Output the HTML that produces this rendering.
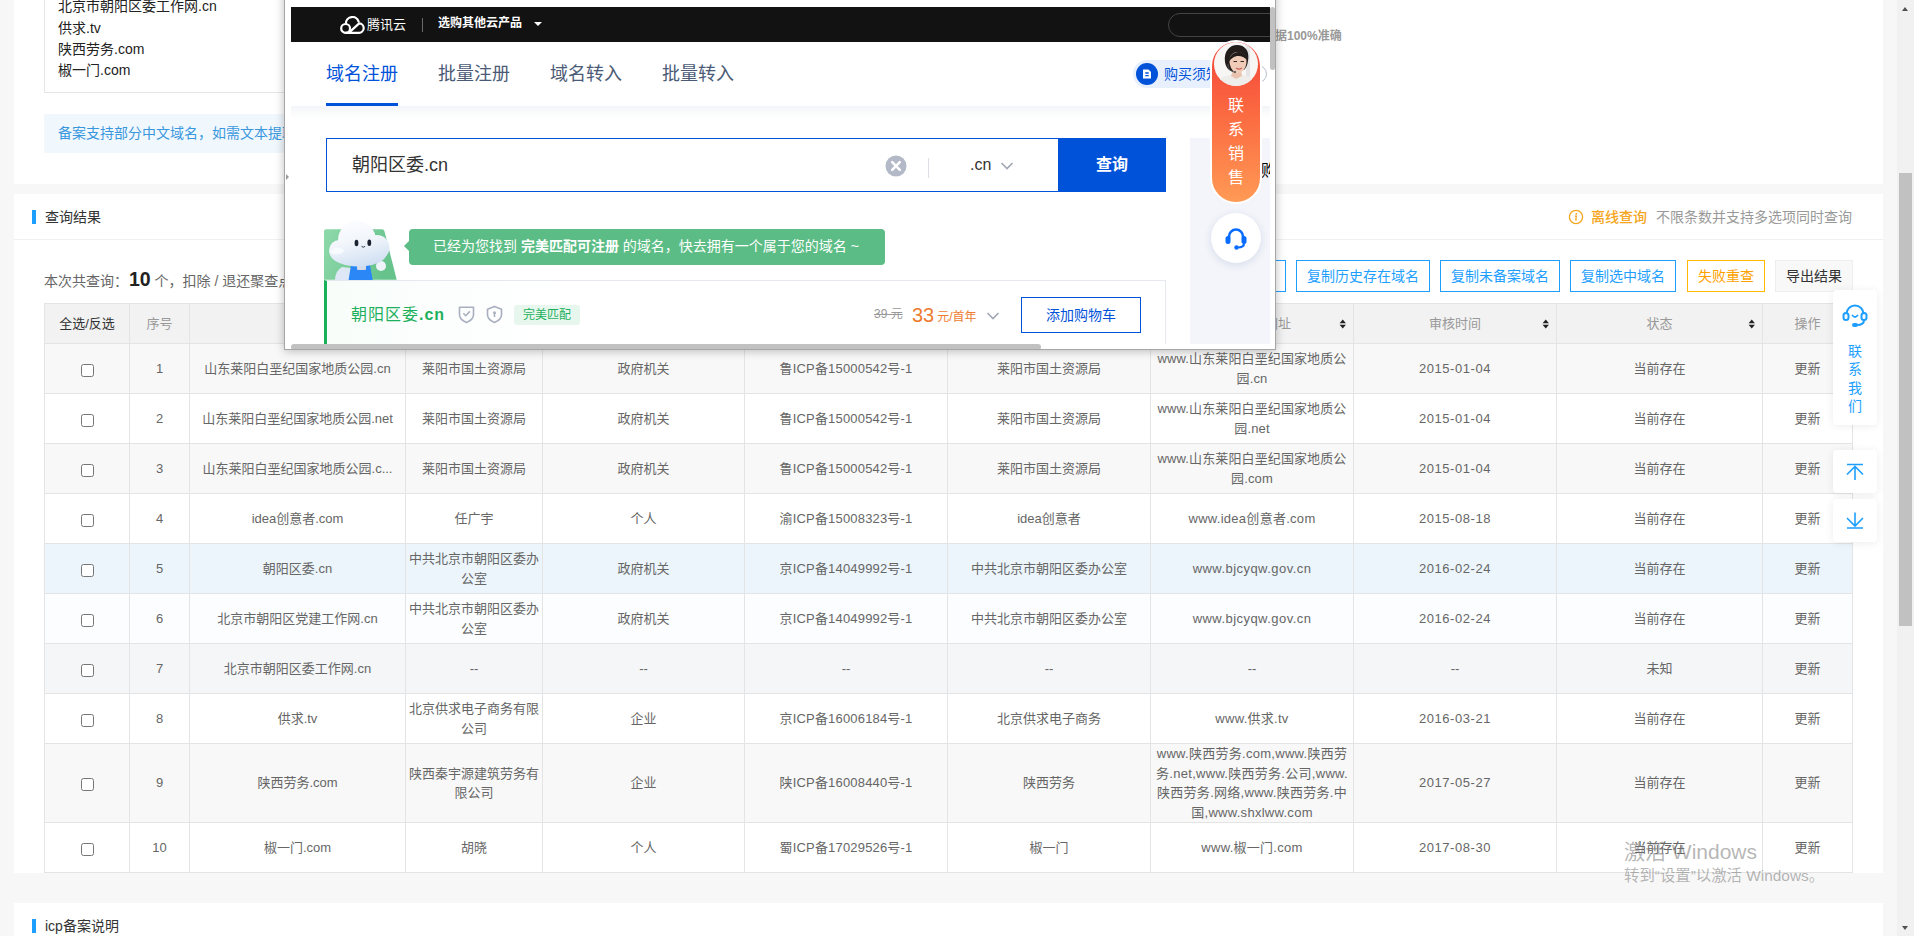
<!DOCTYPE html>
<html lang="zh-CN">
<head>
<meta charset="utf-8">
<title>ICP备案批量查询</title>
<style>
*{box-sizing:border-box;}
html,body{margin:0;padding:0;}
body{width:1914px;height:936px;overflow:hidden;position:relative;background:#f7f7f7;
  font-family:"Liberation Sans","Noto Sans CJK SC",sans-serif;font-size:14px;color:#333;}
.abs{position:absolute;}
/* ---------- page cards ---------- */
.card{position:absolute;left:14px;width:1869px;background:#fff;}
#card1{top:-60px;height:244px;}
#card2{top:194px;height:679px;}
#card3{top:903px;height:60px;}
.ctitle{position:absolute;left:18px;height:14px;border-left:4px solid #1e9fff;padding-left:9px;
  font-size:14px;line-height:14px;color:#333;white-space:nowrap;}
.ctitle span{position:relative;top:0px;}
/* textarea */
#ta{position:absolute;left:30px;top:-20px;width:1100px;height:173px;border:1px solid #e6e6e6;
  padding:33px 0 0 13px;font-size:14px;line-height:21.200px;color:#222;white-space:nowrap;}
#tip{position:absolute;left:30px;top:174px;width:1100px;height:39px;background:#f0f8fe;color:#3a97dd;
  font-size:14px;line-height:39px;padding-left:14px;white-space:nowrap;overflow:hidden;}
#acc{position:absolute;left:1261px;top:89px;font-size:12px;font-weight:bold;color:#999;white-space:nowrap;line-height:14px;}
/* result header */
#hr1{position:absolute;left:0;top:45px;width:1869px;height:1px;background:#f0f0f0;}
#offline{position:absolute;right:31px;top:15px;height:16px;font-size:14px;line-height:16px;white-space:nowrap;color:#999;}
#offline b{color:#f5a623;font-weight:500;margin:0 9px 0 7px;}
#offline svg{vertical-align:-3px;}
#count{position:absolute;left:30px;top:70px;font-size:14px;line-height:30px;color:#666;white-space:nowrap;}
#count b{font-size:19.500px;color:#222;font-weight:bold;margin:0 0 0 1px;position:relative;top:0px;}
#btns{position:absolute;right:30px;top:66px;height:32px;white-space:nowrap;font-size:0;}
.btn{display:inline-block;height:32px;line-height:30px;padding:0 10px;border:1px solid #1e9fff;color:#1e9fff;
  font-size:14px;margin-left:10px;background:#fff;vertical-align:top;}
.btn.warm{border-color:#ffb800;color:#ffa200;margin-left:11px;}
.btn.plain{border-color:#eee;color:#333;background:#f8f8f8;}
/* ---------- table ---------- */
#tbl{position:absolute;left:30px;top:109px;border-collapse:separate;border-spacing:0;table-layout:fixed;
  width:1809px;border-left:1px solid #e4e4e4;border-top:1px solid #e4e4e4;font-size:13px;color:#666;}
#tbl th,#tbl td{border-right:1px solid #e4e4e4;border-bottom:1px solid #e4e4e4;padding:0 3px;text-align:center;
  line-height:19.5px;font-weight:normal;white-space:nowrap;overflow:hidden;}
#tbl th{height:40px;background:#f2f2f2;color:#999;position:relative;}
#tbl th.dark{color:#333;}
#tbl td{height:50px;}
#tbl td.w{letter-spacing:.28px;}#tbl td.w2{letter-spacing:.12px;}#tbl td.n{letter-spacing:.55px;}#tbl td.u{letter-spacing:.45px;}#tbl td.i{letter-spacing:.18px;}
#tbl tr.g td{background:#f8f8f8;}
#tbl tr.g7 td{background:#f5f6f8;}
#tbl tr.h td{background:#ecf5fb;}
#tbl tr.l td{background:#fbfdff;}
#tbl tr.tall td{height:78px;}
.cb{display:inline-block;width:13px;height:13px;border:1px solid #767676;border-radius:2.5px;background:#fff;vertical-align:middle;position:relative;top:1px;}
.sort{position:absolute;right:6.500px;top:15px;width:7.500px;height:10px;}

/* ---------- popup ---------- */
#pop{position:absolute;left:284px;top:-12px;width:992px;height:362px;background:#fff;border:1px solid #a6a6a6;
  box-shadow:0 1px 9px rgba(0,0,0,.26);overflow:hidden;}
#pin{position:absolute;left:6px;top:18px;width:979px;height:337px;overflow:hidden;background:#fff;}
#pbar{position:absolute;left:0;top:0;width:979px;height:35px;background:#121212;}
#plogo{position:absolute;left:49px;top:9px;}
#plogot{position:absolute;left:76px;top:9px;font-size:13px;line-height:18px;color:#fff;white-space:nowrap;}
#pdiv{position:absolute;left:131px;top:11px;width:1px;height:14px;background:#6a6a6a;}
#pmenu{position:absolute;left:147px;top:8px;font-size:12px;line-height:16px;font-weight:bold;color:#fff;white-space:nowrap;}
#pcaret{position:absolute;left:243px;top:15px;width:0;height:0;border-left:4px solid transparent;border-right:4px solid transparent;border-top:4.5px solid #fff;}
#psearch{position:absolute;left:877px;top:6px;width:140px;height:24px;border:1px solid #444;border-radius:12px;}
#ptabs{position:absolute;left:0;top:35px;width:979px;height:64px;background:#fff;}
.ptab{position:absolute;top:20px;font-size:18px;line-height:24px;color:#4b5b76;white-space:nowrap;}
.ptab.on{color:#0052d9;}
#pline{position:absolute;left:35px;top:61px;width:72px;height:3px;background:#0052d9;}
#pgrad{position:absolute;left:0;top:99px;width:979px;height:12px;background:linear-gradient(#f3f5f8,#fff);}
#pnote{position:absolute;left:842px;top:18px;width:112px;height:28px;border-radius:14px;background:#e8f0fe;}
#pnote i{position:absolute;left:3px;top:3px;width:22px;height:22px;border-radius:11px;background:#0052d9;}
#pnote span{position:absolute;left:31px;top:4px;font-size:14px;line-height:20px;color:#0052d9;white-space:nowrap;}
#pbox{position:absolute;left:35px;top:131px;width:733px;height:54px;border:1px solid #0052d9;border-right:0;background:#fff;}
#pbox .v{position:absolute;left:25px;top:13px;font-size:18px;line-height:26px;color:#333;white-space:nowrap;}
#pclr{position:absolute;left:558px;top:16px;}
#pbox .d{position:absolute;left:601px;top:19px;width:1px;height:20px;background:#dcdfe6;}
#pbox .s{position:absolute;left:643px;top:15px;font-size:16px;line-height:22px;color:#333;}
#pchev{position:absolute;left:673px;top:22px;}
#pgo{position:absolute;left:767px;top:131px;width:108px;height:54px;background:#0052d9;color:#fff;font-size:16px;font-weight:bold;
  line-height:54px;text-align:center;}
#pside{position:absolute;left:899px;top:131px;width:90px;height:220px;background:#f3f5fa;}
#pside span{position:absolute;left:71px;top:22px;font-size:16px;line-height:22px;color:#000;}
#pmasbg{position:absolute;left:29px;top:209px;}
#pbubble{position:absolute;left:118px;top:222px;width:476px;height:36px;border-radius:4px;background:#5bbd85;color:#fff;font-size:14px;
  line-height:35px;padding-left:24px;white-space:nowrap;}
#pbubble:before{content:"";position:absolute;left:-5px;top:12px;border-top:5px solid transparent;border-bottom:5px solid transparent;border-right:5px solid #5bbd85;}
#pres{position:absolute;left:33px;top:273px;width:842px;height:80px;border:1px solid #e5e8ee;border-left:3px solid #19b05b;
  background:linear-gradient(90deg,#f8fdfa,#fff 28%);}
#pres .dn{position:absolute;left:24px;top:22px;font-size:16px;letter-spacing:1px;line-height:24px;color:#1db05c;font-weight:normal;white-space:nowrap;}
#pres .dn b{font-weight:bold;}
#pres .tag{position:absolute;left:187px;top:24px;width:66px;height:20px;border-radius:3px;background:#e8f7ee;color:#1db05c;font-size:12px;
  line-height:20px;text-align:center;}
#pres .old{position:absolute;left:547px;top:24px;font-size:12px;line-height:18px;color:#999;text-decoration:line-through;white-space:nowrap;}
#pres .now{position:absolute;left:585px;top:18px;font-size:12px;line-height:30px;color:#ed7b2f;white-space:nowrap;}
#pres .now b{font-size:20px;font-weight:normal;margin-right:3px;position:relative;top:1px;}
#pres .add{position:absolute;left:694px;top:16px;width:120px;height:36px;border:1px solid #0052d9;color:#0052d9;font-size:14px;line-height:34px;text-align:center;background:#fff;}
#phs{position:absolute;left:6px;top:355px;width:750px;height:6px;background:#c1c1c1;border-radius:3px;}
#pvs{position:absolute;left:985px;top:18px;width:5px;height:63px;background:#c1c1c1;border-radius:3px;}
#parrow{position:absolute;left:1px;top:185px;width:0;height:0;border-top:3px solid transparent;border-bottom:3px solid transparent;border-left:3px solid #999;}
/* sales pill */
#pill{position:absolute;left:919px;top:33px;width:52px;height:164px;border-radius:26px;background:#fff;}
#pill .in{position:absolute;left:2px;top:2px;width:48px;height:160px;border-radius:24px;background:linear-gradient(180deg,#f4443a 0%,#fb6a41 45%,#ff9a55 100%);}
#pill .t{position:absolute;left:2px;top:54px;width:48px;text-align:center;color:#fff;font-size:16px;line-height:24px;}
#pava{position:absolute;left:4px;top:2px;}
#pkf{position:absolute;left:920px;top:206px;width:50px;height:50px;border-radius:25px;background:#fff;box-shadow:0 2px 8px rgba(0,40,120,.12);}
#pkf svg{position:absolute;left:12px;top:12px;}

/* ---------- floating sidebar / scrollbar / watermark ---------- */
.fl{position:absolute;left:1833px;width:44px;background:#fff;border-radius:4px;box-shadow:0 1px 8px rgba(0,0,0,.08);}
#fl1{top:290px;height:135px;}
#fl1 svg{position:absolute;left:9px;top:13px;}
#fl1 .t{position:absolute;left:0;top:52px;width:44px;text-align:center;font-size:14px;line-height:18.400px;color:#1e9fff;}
#fl2{top:450px;height:43px;}
#fl3{top:499px;height:43px;}
#fl2 svg,#fl3 svg{position:absolute;left:12px;top:11px;}
#sbar{position:absolute;left:1897px;top:0;width:17px;height:936px;background:#f1f1f1;}
#sbar .th{position:absolute;left:2px;top:173px;width:13px;height:453px;background:#c1c1c1;}
#sbar .u{position:absolute;left:5px;top:7px;width:0;height:0;border-left:3.500px solid transparent;border-right:3.500px solid transparent;border-bottom:4px solid #505050;}
#sbar .d{position:absolute;left:5px;top:926px;width:0;height:0;border-left:3.500px solid transparent;border-right:3.500px solid transparent;border-top:4px solid #505050;}
#wm{position:absolute;left:1624px;top:838px;color:rgba(120,120,120,.55);white-space:nowrap;}
#wm .a{font-size:21px;line-height:28px;}
#wm .b{font-size:15.400px;line-height:20px;margin-top:0px;}
</style>
</head>
<body>

<!-- ================= card 1 : input ================= -->
<div class="card" id="card1">
  <div id="ta">朝阳区委.cn<br>北京市朝阳区党建工作网.cn<br>北京市朝阳区委工作网.cn<br>供求.tv<br>陕西劳务.com<br>椒一门.com</div>
  <div id="tip">备案支持部分中文域名，如需文本提取域名请使用域名提取工具，查询结果仅供参考</div>
  <div id="acc">据100%准确</div>
</div>

<!-- ================= card 2 : results ================= -->
<div class="card" id="card2">
  <div class="ctitle" style="top:16px;"><span>查询结果</span></div>
  <div id="offline"><svg width="16" height="16" viewBox="0 0 16 16"><circle cx="8" cy="8" r="6.6" fill="none" stroke="#f5a623" stroke-width="1.3"/><circle cx="8.3" cy="4.9" r="0.9" fill="#f5a623"/><path d="M6.9 7.2h1.5l-.7 3.6h1.2" fill="none" stroke="#f5a623" stroke-width="1.2"/></svg><b>离线查询</b>不限条数并支持多选项同时查询</div>
  <div id="hr1"></div>
  <div id="count">本次共查询：<b>10</b> 个，扣除 / 退还聚查点：10 / 0</div>
  <div id="btns">
    <span class="btn">复制当前存在域名</span><span class="btn">复制历史存在域名</span><span class="btn">复制未备案域名</span><span class="btn">复制选中域名</span><span class="btn warm">失败重查</span><span class="btn plain">导出结果</span>
  </div>
  <table id="tbl">
    <colgroup><col style="width:85px"><col style="width:60px"><col style="width:216px"><col style="width:137px"><col style="width:202px"><col style="width:203px"><col style="width:203px"><col style="width:203px"><col style="width:203px"><col style="width:206px"><col style="width:90px"></colgroup>
    <tr><th class="dark">全选/反选</th><th>序号</th><th>域名</th><th>主办单位名称</th><th>单位性质</th><th>网站备案/许可证号</th><th>网站名称</th><th>网站首页网址<svg class="sort" viewBox="0 0 8 12"><path d="M4 0.5L7.8 5H0.2zM4 11.5L7.8 7H0.2z" fill="#222"/></svg></th><th>审核时间<svg class="sort" viewBox="0 0 8 12"><path d="M4 0.5L7.8 5H0.2zM4 11.5L7.8 7H0.2z" fill="#222"/></svg></th><th>状态<svg class="sort" viewBox="0 0 8 12"><path d="M4 0.5L7.8 5H0.2zM4 11.5L7.8 7H0.2z" fill="#222"/></svg></th><th>操作</th></tr>
    <tr class="g"><td><i class="cb"></i></td><td>1</td><td>山东莱阳白垩纪国家地质公园.cn</td><td>莱阳市国土资源局</td><td>政府机关</td><td class="i">鲁ICP备15000542号-1</td><td>莱阳市国土资源局</td><td class="w2">www.山东莱阳白垩纪国家地质公<br>园.cn</td><td class="n">2015-01-04</td><td>当前存在</td><td>更新</td></tr>
    <tr><td><i class="cb"></i></td><td>2</td><td>山东莱阳白垩纪国家地质公园.net</td><td>莱阳市国土资源局</td><td>政府机关</td><td class="i">鲁ICP备15000542号-1</td><td>莱阳市国土资源局</td><td class="w2">www.山东莱阳白垩纪国家地质公<br>园.net</td><td class="n">2015-01-04</td><td>当前存在</td><td>更新</td></tr>
    <tr class="g"><td><i class="cb"></i></td><td>3</td><td>山东莱阳白垩纪国家地质公园.c...</td><td>莱阳市国土资源局</td><td>政府机关</td><td class="i">鲁ICP备15000542号-1</td><td>莱阳市国土资源局</td><td class="w2">www.山东莱阳白垩纪国家地质公<br>园.com</td><td class="n">2015-01-04</td><td>当前存在</td><td>更新</td></tr>
    <tr><td><i class="cb"></i></td><td>4</td><td>idea创意者.com</td><td>任广宇</td><td>个人</td><td class="i">渝ICP备15008323号-1</td><td>idea创意者</td><td class="w">www.idea创意者.com</td><td class="n">2015-08-18</td><td>当前存在</td><td>更新</td></tr>
    <tr class="h"><td><i class="cb"></i></td><td>5</td><td>朝阳区委.cn</td><td>中共北京市朝阳区委办<br>公室</td><td>政府机关</td><td class="i">京ICP备14049992号-1</td><td>中共北京市朝阳区委办公室</td><td class="u">www.bjcyqw.gov.cn</td><td class="n">2016-02-24</td><td>当前存在</td><td>更新</td></tr>
    <tr class="l"><td><i class="cb"></i></td><td>6</td><td>北京市朝阳区党建工作网.cn</td><td>中共北京市朝阳区委办<br>公室</td><td>政府机关</td><td class="i">京ICP备14049992号-1</td><td>中共北京市朝阳区委办公室</td><td class="u">www.bjcyqw.gov.cn</td><td class="n">2016-02-24</td><td>当前存在</td><td>更新</td></tr>
    <tr class="g7"><td><i class="cb"></i></td><td>7</td><td>北京市朝阳区委工作网.cn</td><td>--</td><td>--</td><td>--</td><td>--</td><td>--</td><td>--</td><td>未知</td><td>更新</td></tr>
    <tr><td><i class="cb"></i></td><td>8</td><td>供求.tv</td><td>北京供求电子商务有限<br>公司</td><td>企业</td><td class="i">京ICP备16006184号-1</td><td>北京供求电子商务</td><td class="w">www.供求.tv</td><td class="n">2016-03-21</td><td>当前存在</td><td>更新</td></tr>
    <tr class="g tall"><td><i class="cb"></i></td><td>9</td><td>陕西劳务.com</td><td>陕西秦宇源建筑劳务有<br>限公司</td><td>企业</td><td class="i">陕ICP备16008440号-1</td><td>陕西劳务</td><td class="w">www.陕西劳务.com,www.陕西劳<br>务.net,www.陕西劳务.公司,www.<br>陕西劳务.网络,www.陕西劳务.中<br>国,www.shxlww.com</td><td class="n">2017-05-27</td><td>当前存在</td><td>更新</td></tr>
    <tr><td><i class="cb"></i></td><td>10</td><td>椒一门.com</td><td>胡晓</td><td>个人</td><td class="i">蜀ICP备17029526号-1</td><td>椒一门</td><td class="w">www.椒一门.com</td><td class="n">2017-08-30</td><td>当前存在</td><td>更新</td></tr>
  </table>
</div>

<!-- ================= card 3 ================= -->
<div class="card" id="card3">
  <div class="ctitle" style="top:16px;"><span>icp备案说明</span></div>
</div>

<!-- ================= popup ================= -->
<div id="pop">
  <div id="pin">
    <div id="pbar">
      <svg id="plogo" width="25" height="19" viewBox="0 0 25 19"><g fill="none" stroke="#fff" stroke-width="2.200" stroke-linecap="round" stroke-linejoin="round"><path d="M5.600 16.800H18.800a4.700 4.700 0 0 0 .4-9.400L9.200 16.400"/><circle cx="5.600" cy="12.400" r="4.400"/><path d="M5.900 7.900A6.500 6.500 0 0 1 18.600 5.600"/></g></svg>
      <div id="plogot">腾讯云</div>
      <div id="pdiv"></div>
      <div id="pmenu">选购其他云产品</div>
      <div id="pcaret"></div>
      <div id="psearch"></div>
    </div>
    <div id="ptabs">
      <div class="ptab on" style="left:35px;">域名注册</div>
      <div class="ptab" style="left:147px;">批量注册</div>
      <div class="ptab" style="left:259px;">域名转入</div>
      <div class="ptab" style="left:371px;">批量转入</div>
      <div id="pline"></div>
      <div id="pnote"><i><svg width="22" height="22" viewBox="0 0 22 22"><path d="M7 6.5h5.5l2.5 2.5v6.5h-8z" fill="#fff"/><path d="M9.3 10h3.4M9.3 12.6h3.4" stroke="#0052d9" stroke-width="1.3"/></svg></i><span>购买须知</span></div>
    </div>
    <div id="pgrad"></div>
    <div class="abs" style="left:958px;top:58px;width:18px;height:18px;border:1.500px solid #b9bfcc;border-radius:9px;"></div>
    <div id="pside"><span>购</span></div>
    <div id="pbox">
      <div class="v">朝阳区委.cn</div>
      <svg id="pclr" width="22" height="22" viewBox="0 0 22 22"><circle cx="11" cy="11" r="10.5" fill="#b3b9c7"/><path d="M7.2 7.2l7.6 7.6M14.8 7.2l-7.6 7.6" stroke="#fff" stroke-width="2.6" stroke-linecap="round"/></svg>
      <div class="d"></div>
      <div class="s">.cn</div>
      <svg id="pchev" width="14" height="10" viewBox="0 0 14 10"><path d="M1.5 2l5.5 5.5L12.5 2" fill="none" stroke="#a0a6b4" stroke-width="1.6"/></svg>
    </div>
    <div id="pgo">查询</div>
    <svg id="pmasbg" width="82" height="64" viewBox="0 0 82 64">
      <defs><linearGradient id="mg" x1="0" y1="0" x2="1" y2="0.300"><stop offset="0" stop-color="#8fd9aa"/><stop offset="1" stop-color="#66c38c"/></linearGradient>
      <linearGradient id="mw" gradientUnits="userSpaceOnUse" x1="30" y1="5" x2="42" y2="52"><stop offset="0" stop-color="#fcfdff"/><stop offset="0.450" stop-color="#f1f5fb"/><stop offset="1" stop-color="#cfdff2"/></linearGradient></defs>
      <path d="M4 15.200q0-2 2-2H62q1.800 0 2.400 1.800L76.700 63.700H4z" fill="url(#mg)"/>
      <path d="M15 64q0-9 7-13l9 1-2 12z" fill="#dde7f5"/>
      <path d="M28.600 64l2.400-15h19l2.700 15z" fill="#2b86f6"/>
      <rect x="37" y="49" width="9" height="5" rx="1" fill="#d5dbe6"/>
      <circle cx="61" cy="50" r="5" fill="#eef3fa"/>
      <g fill="url(#mw)"><circle cx="37" cy="24" r="19"/><circle cx="19.500" cy="34.500" r="10.500"/><circle cx="57" cy="31.500" r="12.500"/><ellipse cx="38.500" cy="38" rx="28" ry="12.500"/></g>
      <path d="M9.500 36c3-5 10-6 15-1.500-3 4-10 6-15 1.500z" fill="#fafcff" opacity=".8"/>
      <ellipse cx="36.500" cy="27" rx="1.900" ry="3.200" fill="#1b2230"/><ellipse cx="49.300" cy="26.800" rx="1.900" ry="3.200" fill="#1b2230"/>
      <path d="M41.800 30.600q1.500 1.600 3 0" fill="none" stroke="#1b2230" stroke-width="0.900" stroke-linecap="round"/>
    </svg>
    <div id="pbubble">已经为您找到 <b>完美匹配可注册</b> 的域名，快去拥有一个属于您的域名 ~</div>
    <div id="pres">
      <div class="dn">朝阳区委<b>.cn</b></div>
      <svg class="abs" style="left:131px;top:24px" width="17" height="19" viewBox="0 0 17 19"><path d="M1.5 2.2h14v7.6c0 3.6-3 6-7 7.6-4-1.600-7-4-7-7.600z" fill="none" stroke="#a9afbf" stroke-width="1.6" stroke-linejoin="round"/><path d="M5.300 8.200l2.500 2.500 4-4.300" fill="none" stroke="#a9afbf" stroke-width="1.6"/></svg>
      <svg class="abs" style="left:159px;top:24px" width="17" height="19" viewBox="0 0 17 19"><path d="M8.500 1.400l7 2.800v5.600c0 3.600-3 6-7 7.600-4-1.600-7-4-7-7.600V4.200z" fill="none" stroke="#a9afbf" stroke-width="1.600" stroke-linejoin="round"/><circle cx="8.500" cy="7.800" r="1.500" fill="#a9afbf"/><path d="M8.500 8.500v3.600" stroke="#a9afbf" stroke-width="1.5"/></svg>
      <div class="tag">完美匹配</div>
      <div class="old">39 元</div>
      <div class="now"><b>33</b>元/首年<svg width="14" height="10" viewBox="0 0 14 10" style="margin-left:9px;vertical-align:0px"><path d="M1.500 2l5.500 5.500L12.500 2" fill="none" stroke="#a0a6b4" stroke-width="1.600"/></svg></div>
      <div class="add">添加购物车</div>
    </div>
    <div id="pkf"><svg width="26" height="26" viewBox="0 0 26 26"><path d="M6 13.500v-2a7 7 0 0 1 14 0v2" fill="none" stroke="#0a6cff" stroke-width="2.600"/><rect x="2.500" y="11" width="5" height="8" rx="2.500" fill="#0a6cff"/><rect x="18.500" y="11" width="5" height="8" rx="2.500" fill="#0a6cff"/><path d="M21 18.500c0 3-3 4-6.500 4" fill="none" stroke="#0a6cff" stroke-width="2.200"/><circle cx="13.500" cy="22.500" r="2.200" fill="#0a6cff"/></svg></div>
    <div id="pill"><div class="in"></div>
      <svg id="pava" width="44" height="44" viewBox="0 0 44 44"><defs><clipPath id="ac"><circle cx="22" cy="22" r="22"/></clipPath></defs>
        <g clip-path="url(#ac)"><rect width="44" height="44" fill="#f7f6f5"/><rect x="32" y="0" width="4" height="44" fill="#e4e4e6"/>
        <path d="M2 44c1-7 7-9.500 14-11l6 3 7-3c7 1 11 4 12 11z" fill="#efedea"/>
        <path d="M17 34l5 3 6-3 -1-6h-8z" fill="#e9c3af"/>
        <path d="M11 20c-1.500-11 5-17 12-17 8 0 13 6 11 16-.5 4-2 7-4 9l-13 1c-3-1-5.500-5-6-9z" fill="#221c1a"/>
        <path d="M15.500 19c0-6 4-9 8.500-9 5 0 8.500 3.500 8.500 9.500 0 6-4 11.500-8.500 11.500s-8.500-5.500-8.500-12z" fill="#f0cbb8"/>
        <path d="M14.500 20c1-7 6-10.500 11-10 4 .5 7 3 7.500 8-3-3-6-4.500-10-4-3.500.5-6 3-8.500 6z" fill="#221c1a"/>
        <path d="M19.500 19.500h3.500M26.500 19.500h3.500" stroke="#3a2a25" stroke-width="1.100"/>
        <path d="M22.500 26.300q2.500 1.800 5 0" fill="none" stroke="#c9625f" stroke-width="1.300" stroke-linecap="round"/>
        <path d="M14 22c0 5 2.500 7.500 6.500 8" fill="none" stroke="#555" stroke-width="1"/><circle cx="21" cy="30" r="1" fill="#444"/></g></svg>
      <div class="t">联<br>系<br>销<br>售</div>
    </div>
  </div>
  <div id="phs"></div>
  <div id="pvs"></div>
  <div id="parrow"></div>
</div>


<!-- ================= floating ================= -->
<div class="fl" id="fl1">
  <svg width="26" height="26" viewBox="0 0 26 26"><path d="M4.500 11a8.500 8.500 0 0 1 17 0" fill="none" stroke="#1e9fff" stroke-width="2"/><rect x="1.500" y="10" width="5" height="7" rx="2.500" fill="none" stroke="#1e9fff" stroke-width="2"/><rect x="19.500" y="10" width="5" height="7" rx="2.500" fill="none" stroke="#1e9fff" stroke-width="2"/><path d="M10.500 12.500q2.500 3 5 0" fill="none" stroke="#1e9fff" stroke-width="1.800" stroke-linecap="round"/><path d="M22 17c0 3.500-3 5-7 5" fill="none" stroke="#1e9fff" stroke-width="2"/><rect x="10" y="20" width="6" height="4" rx="2" fill="#1e9fff"/></svg>
  <div class="t">联<br>系<br>我<br>们</div>
</div>
<div class="fl" id="fl2"><svg width="20" height="20" viewBox="0 0 20 20"><path d="M2 3.500h16M10 19V5M2 13.500l8-8 8 8" fill="none" stroke="#1e9fff" stroke-width="1.600"/></svg></div>
<div class="fl" id="fl3"><svg width="20" height="20" viewBox="0 0 20 20"><path d="M2 18h16M10 2.500v14M2 8l8 8 8-8" fill="none" stroke="#1e9fff" stroke-width="1.600"/></svg></div>
<div id="sbar"><div class="u"></div><div class="th"></div><div class="d"></div></div>
<div id="wm"><div class="a">激活 Windows</div><div class="b">转到“设置”以激活 Windows。</div></div>


</body>
</html>
